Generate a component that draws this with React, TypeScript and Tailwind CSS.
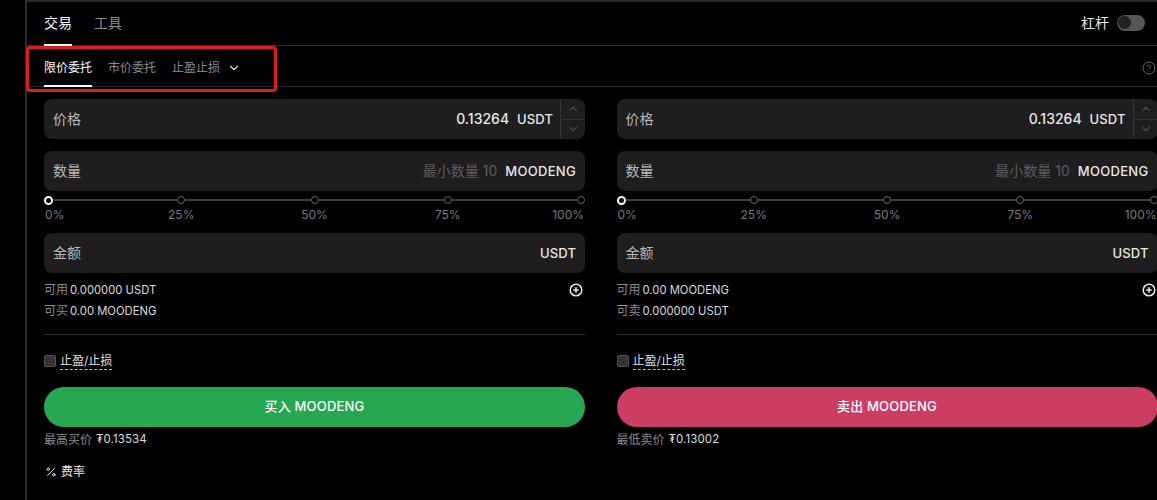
import { ChevronDown, ChevronUp, Percent } from "lucide-react";

const FONT = { fontFamily: "Inter, 'Noto Sans CJK SC', sans-serif" };

function Field({ label, hint, value, unit, stepper }: { label: string; hint?: string; value?: string; unit: string; stepper?: boolean }) {
  return (
    <div className="flex h-10 items-center rounded-lg bg-[#1e1e1e] pl-[9px] text-sm">
      <span className="text-[#b8b8b8]">{label}</span>
      <div className="ml-auto flex items-center">
        {hint && <span className="mr-2 text-[#5c5c5c]">{hint}</span>}
        {value && <span className="mr-2 text-sm font-medium text-[#e8e8e8]">{value}</span>}
        <span className={`text-[13px] font-medium text-[#e8e8e8] ${hint ? "tracking-[0.3px]" : "tracking-[0.1px]"} ${stepper ? "mr-[7px]" : "mr-[9px]"}`}>{unit}</span>
        {stepper && (
          <div className="flex h-10 w-[25px] flex-col border-l border-[#333] text-[#4a4a4a]">
            <div className="flex flex-1 items-center justify-center border-b border-[#333]">
              <ChevronUp size={14} />
            </div>
            <div className="flex flex-1 items-center justify-center">
              <ChevronDown size={14} />
            </div>
          </div>
        )}
      </div>
    </div>
  );
}

function Slider() {
  const marks = ["0%", "25%", "50%", "75%", "100%"];
  return (
    <div className="relative mt-[5px] h-8">
      <div className="absolute left-1 right-1 top-[3px] h-[2px] bg-[#3d3d3d]" />
      <div className="flex justify-between">
        {marks.map((m, i) => (
          <div key={m} className={`relative flex w-2 flex-col ${i === 0 ? "items-start" : i === 4 ? "items-end" : "items-center"}`}>
            <span
              className={
                i === 0
                  ? "h-[9px] w-[9px] shrink-0 rounded-full border-2 border-white bg-black"
                  : "h-2 w-2 shrink-0 rounded-full border border-[#666] bg-black"
              }
            />
            <span className={`whitespace-nowrap text-xs text-[#7a7a7a] ${i === 0 ? "ml-px mt-[2px]" : i === 4 ? "mr-px mt-[3px]" : "mt-[3px]"}`}>{m}</span>
          </div>
        ))}
      </div>
    </div>
  );
}

function Side({ action, color, avail, availUnit, canLabel, can, canUnit, limitLabel, limit }: {
  action: string;
  color: string;
  avail: string;
  availUnit: string;
  canLabel: string;
  can: string;
  canUnit: string;
  limitLabel: string;
  limit: string;
}) {
  return (
    <div className="w-[541px] shrink-0">
      <Field label="价格" value="0.13264" unit="USDT" stepper />
      <div className="mt-3">
        <Field label="数量" hint="最小数量 10" unit="MOODENG" />
      </div>
      <Slider />
      <div className="mt-[5px]">
        <Field label="金额" unit="USDT" />
      </div>
      <div className="mt-[9px] flex h-4 items-center text-xs">
        <span className="mr-[2px] text-[#8c8c8c]">可用</span>
        <span className="text-[11.25px] text-[#dcdcdc]">{avail} {availUnit}</span>
        <svg className="ml-auto mr-[2px]" width="14" height="14" viewBox="0 0 14 14" fill="none" stroke="#e8e8e8">
          <circle cx="7" cy="7" r="5.8" strokeWidth="1.5" />
          <path d="M7 4.2v5.6M4.2 7h5.6" strokeWidth="1.6" />
        </svg>
      </div>
      <div className="mt-[5px] flex h-4 items-center text-xs">
        <span className="mr-[2px] text-[#8c8c8c]">{canLabel}</span>
        <span className="text-[11.25px] text-[#dcdcdc]">{can} {canUnit}</span>
      </div>
      <div className="mt-[15px] border-t border-[#2e2e2e]" />
      <div className="mt-[19px] flex h-[14px] items-center">
        <span className="h-3 w-3 rounded-[2px] border border-[#555] bg-[#333]" />
        <span className="ml-1 border-b border-dashed border-[#bbb] text-xs leading-[16px] text-[#e0e0e0]">止盈/止损</span>
      </div>
      <button className={`mt-[19px] flex h-10 w-full items-center justify-center rounded-[20px] text-[13px] font-medium tracking-[0.2px] text-white ${color}`}>
        {action} MOODENG
      </button>
      <div className="mt-[5px] flex h-4 items-center text-xs">
        <span className="mr-1 text-[#8c8c8c]">{limitLabel}</span>
        <span className="text-[11.5px] tracking-[0.1px] text-[#dcdcdc]">₮{limit}</span>
      </div>
    </div>
  );
}

export default function App() {
  return (
    <div className="relative flex h-[500px] w-[1157px] overflow-hidden bg-black" style={FONT}>
      <div className="w-[25px] shrink-0 bg-black" />
      <div className="w-[2px] shrink-0 bg-[#2b2b2b]" />
      <div className="min-w-0 flex-1">
        <div className="h-[2px] bg-[#2b2b2b]" />

        {/* main tabs */}
        <div className="flex h-[44px] items-stretch border-b border-[#2e2e2e] pl-[17px]">
          <div className="relative flex w-7 items-center justify-center pb-[2px] text-sm text-white">
            交易
            <span className="absolute inset-x-0 bottom-[-1px] h-[2px] bg-white" />
          </div>
          <div className="ml-[22px] flex items-center pb-[2px] text-sm text-[#8c8c8c]">工具</div>
          <div className="ml-auto flex items-center pb-[2px] pr-3">
            <span className="mr-2 text-sm text-[#e8e8e8]">杠杆</span>
            <span className="flex h-4 w-7 items-center rounded-full bg-[#555] pl-[1px]">
              <span className="h-[13px] w-[13px] rounded-full bg-[#222]" />
            </span>
          </div>
        </div>

        {/* order type tabs */}
        <div className="flex h-[41px] items-stretch border-b border-[#2e2e2e] pl-[17px] pt-1 text-xs">
          <div className="relative flex w-12 items-center justify-center text-white">
            限价委托
            <span className="absolute inset-x-0 bottom-[-1px] h-[2px] bg-white" />
          </div>
          <div className="ml-4 flex items-center text-[#8c8c8c]">市价委托</div>
          <div className="ml-4 flex items-center text-[#8c8c8c]">
            止盈止损
            <ChevronDown size={14} className="ml-[7px] text-[#e0e0e0]" />
          </div>
          <div className="ml-auto flex items-center pr-[1px] text-[#666]">
            <svg width="14" height="14" viewBox="0 0 14 14" fill="none" stroke="currentColor">
              <circle cx="7" cy="7" r="6" />
              <path d="M5.4 5.6a1.6 1.6 0 1 1 2.4 1.4c-.5.3-.8.6-.8 1.2" />
              <path d="M7 9.8v.8" />
            </svg>
          </div>
        </div>

        {/* buy / sell */}
        <div className="mt-3 flex gap-[31.5px] pl-[17px]">
          <Side
            action="买入"
            color="bg-[#26a852]"
            avail="0.000000"
            availUnit="USDT"
            canLabel="可买"
            can="0.00"
            canUnit="MOODENG"
            limitLabel="最高买价"
            limit="0.13534"
          />
          <Side
            action="卖出"
            color="bg-[#cc3d63]"
            avail="0.00"
            availUnit="MOODENG"
            canLabel="可卖"
            can="0.000000"
            canUnit="USDT"
            limitLabel="最低卖价"
            limit="0.13002"
          />
        </div>

        <div className="mt-[16px] flex items-center pl-[18px] text-xs text-[#e8e8e8]">
          <Percent size={12} className="mr-1" />
          费率
        </div>
      </div>

      {/* red annotation box */}
      <div className="absolute left-[26px] top-[46px] h-[46px] w-[251px] rounded-[4px] border-[3px] border-[#dc1f1b]" />
    </div>
  );
}
